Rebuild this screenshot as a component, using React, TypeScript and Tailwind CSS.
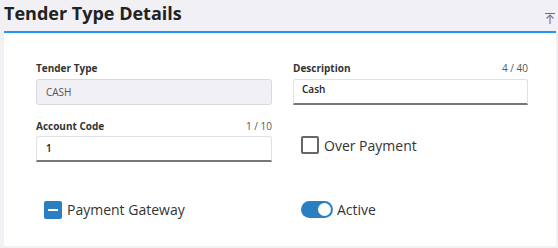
import React from "react";

const font = { fontFamily: '"Open Sans", "Noto Sans", sans-serif' };

function Label({ text, count }: { text: string; count?: string }) {
  return (
    <div className="flex h-[14px] items-end justify-between text-[10px] leading-[14px]">
      <span className="font-bold text-[#333]">{text}</span>
      {count && <span className="text-[#555]">{count}</span>}
    </div>
  );
}

export default function App() {
  return (
    <div style={font} className="h-[248px] w-[558px] bg-[#f0f0f5] pl-[4px] pr-[2px]">
      <div className="flex h-[31px] items-start justify-between">
        <h1 className="mt-[1px] text-[18px] leading-[24px] font-bold text-[#222]">Tender Type Details</h1>
        <svg width="10" height="11" viewBox="0 0 10 11" className="mt-[13px] mr-[1px]">
          <line x1="0" y1="0.5" x2="10" y2="0.5" stroke="#6d6d80" strokeWidth="1" />
          <line x1="5" y1="2" x2="5" y2="11" stroke="#8a6aa8" strokeWidth="1.2" />
          <path d="M1.5 5.5 L5 2 L8.5 5.5" fill="none" stroke="#7a7090" strokeWidth="1.1" />
        </svg>
      </div>
      <div className="h-[2px] bg-[#2196f3]" />
      <div className="h-[213px] bg-white pt-[28px] pl-[32px] pr-[28px]">
        <div className="grid grid-cols-[236px_235px] gap-x-[21px]">
          <div>
            <Label text="Tender Type" />
            <div className="mt-[4px] flex h-[26px] items-center rounded-[3px] border border-[#d8d8de] bg-[#f0f0f5] px-[9px] text-[10px] text-[#555]">
              CASH
            </div>
          </div>
          <div>
            <Label text="Description" count="4 / 40" />
            <div className="mt-[4px] h-[26px] rounded-t-[3px] border border-[#e0e0e6] border-b-2 border-b-[#777] bg-white px-[8px] pt-[3px] text-[10px] leading-[12px] font-semibold text-[#222]">
              Cash
            </div>
          </div>
          <div className="mt-[14px]">
            <Label text="Account Code" count="1 / 10" />
            <div className="mt-[3px] flex h-[26px] items-center rounded-t-[3px] border border-[#e0e0e6] border-b-2 border-b-[#777] bg-white px-[9px] text-[10px] font-semibold text-[#222]">
              1
            </div>
          </div>
          <div className="mt-[23px] flex items-center gap-[5px] pl-[8px]">
            <div className="h-[18px] w-[18px] rounded-[2px] border-2 border-[#666]" />
            <span className="text-[14px] text-[#333]">Over Payment</span>
          </div>
        </div>
        <div className="mt-[37px] grid grid-cols-[236px_235px] gap-x-[21px]">
          <div className="flex items-center gap-[5px] pl-[8px]">
            <div className="flex h-[18px] w-[18px] items-center justify-center rounded-[2px] bg-[#2a7fc1]">
              <div className="h-[2px] w-[10px] bg-white" />
            </div>
            <span className="text-[14px] text-[#333]">Payment Gateway</span>
          </div>
          <div className="flex items-center gap-[4px] pl-[8px]">
            <div className="flex h-[17px] w-[32px] items-center justify-end rounded-full bg-[#2a7fc1] pr-[2px]">
              <div className="h-[13px] w-[13px] rounded-full bg-white" />
            </div>
            <span className="text-[14px] text-[#333]">Active</span>
          </div>
        </div>
      </div>
    </div>
  );
}
